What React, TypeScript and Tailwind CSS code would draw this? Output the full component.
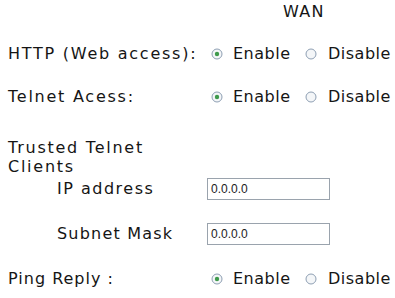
import React from 'react';

const Radio: React.FC<{ checked?: boolean }> = ({ checked }) => (
  <svg width="12" height="12" viewBox="0 0 12 12" className="shrink-0">
    <circle cx="6" cy="6" r="5" fill="#f4f6f8" stroke="#8e9fb3" strokeWidth="1" />
    {checked && <circle cx="6" cy="6" r="2.2" fill="#3f9a4c" />}
  </svg>
);

const Toggle: React.FC = () => (
  <div className="flex items-center pl-[4px] tracking-[0.5px]">
    <Radio checked />
    <span className="ml-[10px] w-[72px]">Enable</span>
    <Radio />
    <span className="ml-[11px]">Disable</span>
  </div>
);

const IpInput: React.FC = () => (
  <div className="w-[123px] h-[22px] border border-[#9aa3ad] bg-white flex items-center px-[3px] text-[12px] tracking-normal text-[#222] font-['Liberation_Sans',sans-serif]">
    0.0.0.0
  </div>
);

export default function App() {
  return (
    <div className="w-[395px] h-[298px] bg-white text-[#151515] text-[16px] tracking-[1.75px] font-['DejaVu_Sans',sans-serif] overflow-hidden whitespace-nowrap">
      <div className="h-6 flex items-center pl-[283px] tracking-[1.3px]">WAN</div>

      <div className="mt-5 h-5 flex items-center">
        <div className="w-[207px] pl-2">HTTP (Web access):</div>
        <Toggle />
      </div>

      <div className="mt-[23px] h-5 flex items-center">
        <div className="w-[207px] pl-2">Telnet Acess:</div>
        <Toggle />
      </div>

      <div className="mt-[31px] pl-2 leading-[19px]">
        Trusted Telnet
        <br />
        Clients
      </div>

      <div className="mt-[2px] h-[22px] flex items-center">
        <div className="w-[207px] pl-[57px] tracking-[1.5px]">IP address</div>
        <IpInput />
      </div>

      <div className="mt-[23px] h-[22px] flex items-center">
        <div className="w-[207px] pl-[57px] tracking-[1.2px]">Subnet Mask</div>
        <IpInput />
      </div>

      <div className="mt-6 h-5 flex items-center">
        <div className="w-[207px] pl-2 tracking-[1px]">Ping Reply :</div>
        <Toggle />
      </div>
    </div>
  );
}
